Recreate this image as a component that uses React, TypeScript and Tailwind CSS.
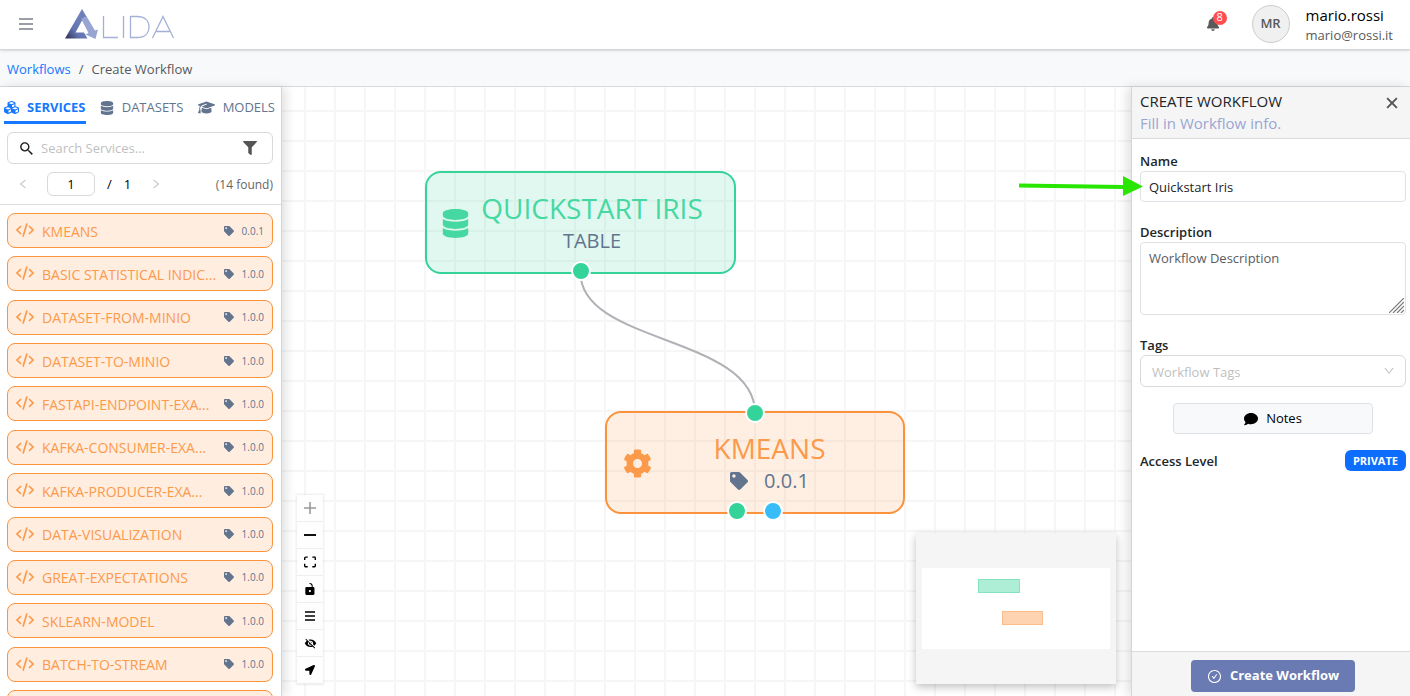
import { useState } from "react";
import type { ReactNode } from "react";
import { FaBell, FaCog, FaComment, FaCubes, FaDatabase, FaFilter, FaLocationArrow, FaTag } from "react-icons/fa";
import { FaGraduationCap } from "react-icons/fa6";
import { AiOutlineCheckCircle, AiOutlineDown, AiOutlineLeft, AiOutlineRight } from "react-icons/ai";
import { IoMdClose, IoMdEyeOff, IoMdSearch } from "react-icons/io";

const services = [
  { name: "KMEANS", version: "0.0.1" },
  { name: "BASIC STATISTICAL INDIC...", version: "1.0.0" },
  { name: "DATASET-FROM-MINIO", version: "1.0.0" },
  { name: "DATASET-TO-MINIO", version: "1.0.0" },
  { name: "FASTAPI-ENDPOINT-EXA...", version: "1.0.0" },
  { name: "KAFKA-CONSUMER-EXA...", version: "1.0.0" },
  { name: "KAFKA-PRODUCER-EXA...", version: "1.0.0" },
  { name: "DATA-VISUALIZATION", version: "1.0.0" },
  { name: "GREAT-EXPECTATIONS", version: "1.0.0" },
  { name: "SKLEARN-MODEL", version: "1.0.0" },
  { name: "BATCH-TO-STREAM", version: "1.0.0" },
  { name: "STREAM-TO-BATCH", version: "1.0.0" },
];

function Logo() {
  return (
    <svg width="110" height="32" viewBox="0 0 110 32" role="img" aria-label="Alida">
      <defs>
        <linearGradient id="logoDark" x1="0" y1="1" x2="0.7" y2="0.3">
          <stop offset="0" stopColor="#2b2b55" />
          <stop offset="0.5" stopColor="#6375b0" />
          <stop offset="1" stopColor="#6d80b9" />
        </linearGradient>
      </defs>
      <path d="M17 1L0 30.500H22.500L19 24.500H10.500L17 12.500L22 9.500Z" fill="url(#logoDark)" />
      <path d="M17 12.500L16.500 10.500L21.500 8.200L30 22.500L33 21.500L30.500 31L20.500 26.500L23.500 25Z" fill="#98a5d2" />
      <g fill="none" stroke="#a5b0d6" strokeWidth="1.300">
        <path d="M38.500 8V29.500H53" />
        <path d="M58.500 8V30" />
        <path d="M65.500 8.500V29.500H72C80 29.500 84 25 84 19S80 8.500 72 8.500Z" />
        <path d="M87.500 30L98 8.500L108.500 30M91 23.500H105" />
      </g>
    </svg>
  );
}

function CodeIcon() {
  return (
    <svg
      width="18"
      height="14"
      viewBox="0 0 18 14"
      className="mb-px shrink-0"
      fill="none"
      stroke="currentColor"
      strokeWidth="1.700"
      strokeLinecap="round"
      aria-hidden="true"
    >
      <path d="M4.500 3.500L1 7L4.500 10.500M10.800 1L7.200 13M13.500 3.500L17 7L13.500 10.500" />
    </svg>
  );
}

function Header() {
  return (
    <header className="relative z-20 flex h-[50px] shrink-0 items-center border-b border-gray-300 bg-white pr-[17px] pb-[2px] pl-[19px] shadow-sm">
      <button aria-label="Menu">
        <svg width="14" height="12" fill="#9b9fa5">
          <path d="M0 0H14V2H0ZM0 5H14V7H0ZM0 10H14V12H0Z" />
        </svg>
      </button>
      <a href="#" className="ml-8">
        <Logo />
      </a>
      <div className="ml-auto flex items-center">
        <button aria-label="Notifications" className="relative mr-8 text-[#595959]">
          <FaBell size={14} />
          <span className="absolute -top-[6px] left-[7px] flex h-[14px] w-[14px] items-center justify-center rounded-full bg-[#ff4d4f] text-[11px] text-white">
            8
          </span>
        </button>
        <span className="flex h-[38px] w-[38px] items-center justify-center rounded-full border border-[#ccc] bg-[#f0f0f0] text-[13px] font-semibold text-[#595959]">
          MR
        </span>
        <div className="ml-4 pt-[3px]">
          <p className="text-[15px] leading-5 text-black">mario.rossi</p>
          <p className="text-[13px] leading-5 text-[#595959]">mario@rossi.it</p>
        </div>
      </div>
    </header>
  );
}

function Tab({ icon, label, active = false }: { icon: ReactNode; label: string; active?: boolean }) {
  return (
    <button
      role="tab"
      aria-selected={active}
      className={
        active
          ? "flex h-[37px] items-center gap-2 border-b-[3px] border-[#1677ff] pt-[7px] text-[13px] font-bold text-[#1677ff]"
          : "flex h-[37px] items-center gap-2 border-b-[3px] border-transparent pt-[7px] text-[13px] text-slate-500"
      }
    >
      {icon}
      {label}
    </button>
  );
}

function Sidebar() {
  return (
    <aside className="relative z-10 flex w-[282px] shrink-0 flex-col border-r border-gray-300 bg-white shadow-[4px_0_10px_rgba(0,0,0,0.12)]">
      <div role="tablist" className="flex justify-between pr-[6px] pl-1">
        <Tab icon={<FaCubes size={15} />} label="SERVICES" active />
        <Tab icon={<FaDatabase size={14} />} label="DATASETS" />
        <Tab icon={<FaGraduationCap size={17} />} label="MODELS" />
      </div>
      <div className="px-2 pt-2 pl-[7px]">
        <div className="flex h-8 items-center rounded-md border border-[#d9d9d9] px-[10px]">
          <IoMdSearch size={17} className="text-[#222]" />
          <input
            aria-label="Search Services"
            placeholder="Search Services..."
            className="ml-[6px] min-w-0 flex-1 pt-[2px] text-[13px] outline-none placeholder:text-[#bfbfbf]"
          />
          <button aria-label="Filter" className="pr-[5px] text-[#555]">
            <FaFilter size={14} />
          </button>
        </div>
      </div>
      <div className="flex h-[41px] shrink-0 items-center border-b border-[#dcdfe4] pr-2 pl-[17px] text-[13px]">
        <button aria-label="Previous page" className="text-[#bfbfbf]">
          <AiOutlineLeft size={12} />
        </button>
        <input
          aria-label="Page"
          defaultValue="1"
          className="ml-[18px] h-6 w-12 rounded-md border border-[#d9d9d9] text-center outline-none"
        />
        <span className="ml-3 pt-[2px]">/</span>
        <span className="ml-3 pt-[2px]">1</span>
        <button aria-label="Next page" className="ml-[19px] text-[#bfbfbf]">
          <AiOutlineRight size={12} />
        </button>
        <span className="ml-auto pt-[2px] text-xs text-[#666]">(14 found)</span>
      </div>
      <div className="min-h-0 flex-1 overflow-hidden pt-2 pr-2 pl-[7px]">
        <ul className="flex h-[512px] flex-col justify-between">
          {services.map((service) => (
            <li
              key={service.name}
              className="flex h-[35px] items-center rounded-lg border border-[#fb923c] bg-[#ffede0] px-2 text-[#fb9a4b]"
            >
              <CodeIcon />
              <span className="ml-2 pt-[2px] text-sm whitespace-nowrap">{service.name}</span>
              <FaTag size={10} className="ml-auto shrink-0 text-slate-500" />
              <span className="ml-2 pt-px text-[10px] text-slate-500">{service.version}</span>
            </li>
          ))}
        </ul>
      </div>
    </aside>
  );
}

function Handle({ className }: { className: string }) {
  return <span className={`absolute h-5 w-5 rounded-full border-2 border-white ${className}`} />;
}

function Control({ label, children }: { label: string; children: ReactNode }) {
  return (
    <button
      aria-label={label}
      className="flex h-[27px] w-[26px] items-center justify-center border-b border-[#eee] bg-[#fefefe] text-black"
    >
      {children}
    </button>
  );
}

function Controls() {
  return (
    <div className="absolute bottom-3 left-[15px] flex flex-col shadow-[0_0_2px_1px_rgba(0,0,0,0.08)]">
      <Control label="Zoom in">
        <svg width="12" height="12" viewBox="0 0 32 32" fill="#999">
          <path d="M32 18.133H18.133V32h-4.266V18.133H0v-4.266h13.867V0h4.266v13.867H32z" />
        </svg>
      </Control>
      <Control label="Zoom out">
        <svg width="12" height="2" viewBox="0 0 32 5">
          <path d="M0 0h32v5H0z" />
        </svg>
      </Control>
      <Control label="Fit view">
        <svg width="12" height="12" viewBox="0 0 32 30">
          <path d="M3.692 4.63c0-.53.4-.938.939-.938h5.215V0H4.708C2.13 0 0 2.054 0 4.63v5.216h3.692V4.631zM27.354 0h-5.2v3.692h5.17c.53 0 .984.4.984.939v5.215H32V4.631A4.624 4.624 0 0027.354 0zm.954 24.83c0 .532-.4.94-.939.94h-5.215v3.768h5.215c2.577 0 4.631-2.13 4.631-4.707v-5.139h-3.692v5.139zm-23.677.94c-.531 0-.939-.4-.939-.94v-5.138H0v5.139c0 2.577 2.13 4.707 4.708 4.707h5.138V25.77H4.631z" />
        </svg>
      </Control>
      <Control label="Lock">
        <svg width="12" height="12" viewBox="0 0 25 32">
          <path d="M21.333 10.667H19.81V7.619C19.81 3.429 16.38 0 12.19 0c-4.114 1.828-1.37 2.133.305 2.438 1.676.305 4.42 2.59 4.42 5.181v3.048H3.047A3.056 3.056 0 000 13.714v15.238A3.056 3.056 0 003.048 32h18.285a3.056 3.056 0 003.048-3.048V13.714a3.056 3.056 0 00-3.048-3.047zM12.19 24.533a3.056 3.056 0 01-3.047-3.047 3.056 3.056 0 013.047-3.048 3.056 3.056 0 013.048 3.048 3.056 3.056 0 01-3.048 3.047z" />
        </svg>
      </Control>
      <Control label="List">
        <svg width="10" height="10">
          <path d="M0 1H10M0 5H10M0 9H10" stroke="#000" strokeWidth="1.400" />
        </svg>
      </Control>
      <Control label="Hide">
        <IoMdEyeOff size={13} />
      </Control>
      <Control label="Locate">
        <FaLocationArrow size={10} />
      </Control>
    </div>
  );
}

function MiniMap() {
  return (
    <svg
      width="200"
      height="151"
      className="absolute right-[15px] bottom-3 bg-[#f5f5f5] shadow-[0_3px_8px_rgba(0,0,0,0.25)]"
      role="img"
      aria-label="Mini map"
    >
      <rect x="6" y="35" width="188" height="81" fill="#fff" />
      <rect x="62.500" y="46.500" width="41" height="13" fill="#aeeed6" stroke="#86e3c0" />
      <rect x="86.500" y="78.500" width="40" height="13" fill="#fdd3b1" stroke="#fbbd8b" />
    </svg>
  );
}

function Canvas() {
  return (
    <main className="relative min-w-0 flex-1 overflow-hidden bg-white bg-[linear-gradient(to_right,#f6f6f6_2px,transparent_2px),linear-gradient(to_bottom,#f6f6f6_2px,transparent_2px)] bg-[size:30px_30px] bg-[position:22px_23px]">
      <svg className="absolute top-0 left-0 h-full w-full" aria-hidden="true">
        <path d="M298.500 186C298.500 257 473 249 473 326" fill="none" stroke="#b1b1b7" strokeWidth="2" />
      </svg>

      <div className="absolute top-[84px] left-[143px] flex h-[103px] w-[311px] items-center rounded-2xl border-2 border-[#34d399] bg-[#34d399]/15 pl-[14px]">
        <FaDatabase size={29} className="mt-[2px] text-[#46d8a2]" />
        <div className="flex-1 pr-5 pb-[2px] text-center">
          <p className="text-[28px] leading-[38px] text-[#46d8a2]">QUICKSTART IRIS</p>
          <p className="text-xl leading-7 text-slate-500">TABLE</p>
        </div>
        <Handle className="-bottom-[9px] left-[144px] bg-[#34d399]" />
      </div>

      <div className="absolute top-[324px] left-[323px] flex h-[103px] w-[300px] items-center rounded-2xl border-2 border-[#fb923c] bg-[#fb923c]/15 pl-4">
        <FaCog size={29} className="mt-[2px] text-[#fb9a4b]" />
        <div className="flex-1 pr-4 pb-[2px] text-center">
          <p className="text-[28px] leading-[38px] text-[#fb9a4b]">KMEANS</p>
          <p className="flex items-center justify-center gap-4 text-xl leading-7 text-slate-500">
            <FaTag size={18} />
            0.0.1
          </p>
        </div>
        <Handle className="-top-[10px] left-[138px] bg-[#34d399]" />
        <Handle className="-bottom-[9px] left-[120px] bg-[#34d399]" />
        <Handle className="-bottom-[9px] left-[156px] bg-[#38bdf8]" />
      </div>

      <Controls />
      <MiniMap />
    </main>
  );
}

function Pointer() {
  return (
    <svg width="125" height="20" viewBox="0 0 125 20" className="absolute top-[5px] -left-[121px]" aria-hidden="true">
      <path d="M0 7.500L104 9V0L124 10.500L104 20V13L0 11.500Z" fill="#28e600" />
    </svg>
  );
}

function WorkflowPanel() {
  const [name, setName] = useState("Quickstart Iris");

  return (
    <aside className="relative z-10 flex w-[279px] shrink-0 flex-col border-l border-gray-300 bg-white text-[13px] text-[#212529] shadow-[-4px_0_10px_rgba(0,0,0,0.12)]">
      <div className="flex h-[52px] shrink-0 items-start justify-between border-b border-[#dcdcdc] bg-[#f5f5f5] pt-[3px] pr-[9px] pl-2">
        <div>
          <h1 className="text-[15px] leading-[22px]">CREATE WORKFLOW</h1>
          <p className="text-[15px] leading-[22px] text-[#9aa5d3]">Fill in Workflow info.</p>
        </div>
        <button aria-label="Close" className="mt-1 text-[#555]">
          <IoMdClose size={18} stroke="currentColor" strokeWidth={16} />
        </button>
      </div>

      <form className="flex min-h-0 flex-1 flex-col pt-3 pr-1 pl-2">
        <label htmlFor="name" className="leading-5 font-semibold">
          Name
        </label>
        <div className="relative">
          <input
            id="name"
            value={name}
            onChange={(e) => setName(e.target.value)}
            className="block h-[31px] w-full rounded border border-[#dee2e6] px-2 text-[13px] outline-none"
          />
          <Pointer />
        </div>

        <label htmlFor="description" className="mt-5 leading-5 font-semibold">
          Description
        </label>
        <div className="relative">
          <textarea
            id="description"
            placeholder="Workflow Description"
            className="block h-[73px] w-full resize-none rounded border border-[#dee2e6] px-2 py-[5px] text-[13px] leading-5 outline-none placeholder:text-[#595c5f]"
          />
          <svg width="15" height="15" className="absolute right-[2px] bottom-[2px]" aria-hidden="true">
            <path d="M0 15L15 0M4 15L15 4M8 15L15 8M12 15L15 12" stroke="#777" strokeWidth="1.200" />
          </svg>
        </div>

        <label htmlFor="tags" className="mt-5 leading-5 font-semibold">
          Tags
        </label>
        <div className="relative">
          <select
            id="tags"
            defaultValue=""
            className="block h-8 w-full appearance-none rounded-md border border-[#d9d9d9] bg-white px-[11px] pt-[3px] text-[13px] text-[#bfbfbf] outline-none"
          >
            <option value="">Workflow Tags</option>
          </select>
          <AiOutlineDown size={12} className="pointer-events-none absolute top-[10px] right-[11px] text-[#bfbfbf]" />
        </div>

        <button
          type="button"
          className="mt-4 flex h-[31px] w-[200px] items-center justify-center gap-2 self-center rounded border border-[#dee2e6] bg-[#f8f9fa] text-black"
        >
          <FaComment size={14} />
          Notes
        </button>

        <div className="mt-4 flex items-center justify-between">
          <span className="pt-[2px] font-semibold">Access Level</span>
          <span className="flex h-[21px] items-center rounded-md bg-[#0d6efd] px-2 text-[11px] font-bold text-white">
            PRIVATE
          </span>
        </div>
      </form>

      <div className="flex h-[45px] shrink-0 items-center justify-center border-t border-[#dcdcdc] bg-[#f5f5f5] pt-1 pl-1">
        <button className="flex h-8 w-[164px] items-center justify-center gap-2 rounded bg-[#6a7ab2] text-[13px] font-bold text-white">
          <AiOutlineCheckCircle size={15} />
          Create Workflow
        </button>
      </div>
    </aside>
  );
}

export default function App() {
  return (
    <div className="flex h-screen flex-col overflow-hidden bg-white font-['Open_Sans',sans-serif] text-black">
      <Header />
      <nav className="flex h-[37px] shrink-0 items-center gap-2 border-b border-[#d5dade] bg-[#f8f9fb] px-[7px] pt-1 text-[13px] text-[#55595c]">
        <a href="#" className="text-[#1677ff]">
          Workflows
        </a>
        <span>/</span>
        <span>Create Workflow</span>
      </nav>
      <div className="flex min-h-0 flex-1">
        <Sidebar />
        <Canvas />
        <WorkflowPanel />
      </div>
    </div>
  );
}
